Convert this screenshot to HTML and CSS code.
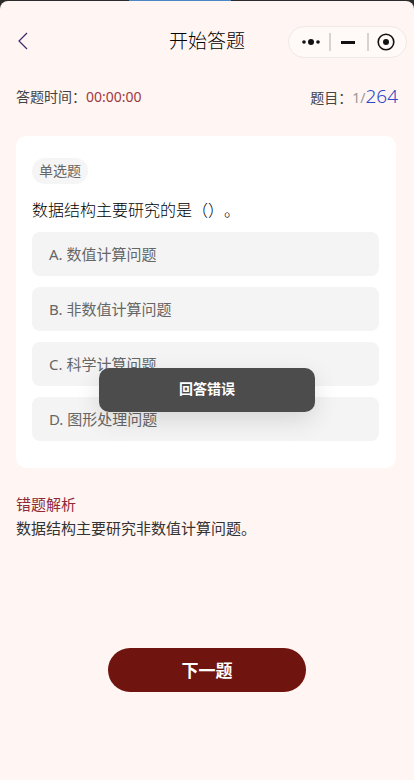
FILE: index.html
```html
<!DOCTYPE html>
<html lang="zh-CN">
<head>
    <meta charset="UTF-8">
    <meta name="viewport" content="width=device-width, initial-scale=1.0">
    <title>开始答题</title>
    <link rel="stylesheet" href="styles.css">
</head>
<body>
    <div class="top-strip">
        <div class="top-progress"></div>
    </div>

    <div class="page">
        <div class="navbar">
            <svg class="back-icon" width="12" height="18" viewBox="0 0 12 18">
                <path d="M10 1 L2 9 L10 17" fill="none" stroke="#3c2a6e" stroke-width="1.2"/>
            </svg>
            <div class="nav-title">开始答题</div>
            <div class="capsule">
                <svg class="capsule-dots" width="18" height="8" viewBox="0 0 18 8">
                    <circle cx="2" cy="4" r="1.8" fill="#111"/>
                    <circle cx="9" cy="4" r="3" fill="#111"/>
                    <circle cx="16" cy="4" r="1.8" fill="#111"/>
                </svg>
                <div class="capsule-line line-first"></div>
                <div class="capsule-minus"></div>
                <div class="capsule-line line-second"></div>
                <svg class="capsule-target" width="18" height="18" viewBox="0 0 18 18">
                    <circle cx="9" cy="9" r="7.8" fill="none" stroke="#111" stroke-width="1.6"/>
                    <circle cx="9" cy="9" r="3" fill="#111"/>
                </svg>
            </div>
        </div>

        <div class="stats">
            <div class="stat-time">答题时间：<span class="time-value">00:00:00</span></div>
            <div class="stat-count">题目：<span class="count-now">1/</span><span class="count-total">264</span></div>
        </div>

        <div class="card">
            <span class="tag">单选题</span>
            <div class="question">数据结构主要研究的是（）。</div>
            <div class="options">
                <div class="option">A. 数值计算问题</div>
                <div class="option">B. 非数值计算问题</div>
                <div class="option">C. 科学计算问题</div>
                <div class="option">D. 图形处理问题</div>
            </div>
        </div>

        <div class="analysis">
            <div class="analysis-title">错题解析</div>
            <div class="analysis-text">数据结构主要研究非数值计算问题。</div>
        </div>

        <div class="footer">
            <button class="next-btn">下一题</button>
        </div>
    </div>

    <div class="toast">回答错误</div>
</body>
</html>
```

FILE: styles.css
```css
* {
    box-sizing: border-box;
}

html, body {
    height: 100%;
}

body {
    margin: 0;
    overflow: hidden;
    display: flex;
    flex-direction: column;
    background-color: #2b2b2b;
    font-family: "Noto Sans", "Noto Sans CJK SC", sans-serif;
    text-spacing-trim: space-all;
}

.top-strip {
    height: 1px;
    flex-shrink: 0;
    padding-left: 129px;
}

.top-progress {
    width: 102px;
    height: 1px;
    background-color: #4a88c7;
}

.page {
    flex: 1;
    padding: 0 16px;
    background-color: #fff5f2;
    border-radius: 8px 8px 0 0;
}

.navbar {
    display: flex;
    align-items: center;
    justify-content: space-between;
    height: 42px;
    margin-top: 20px;
    position: relative;
}

.back-icon {
    margin-left: 1px;
    margin-top: -2px;
}

.nav-title {
    position: absolute;
    left: 0;
    right: 0;
    top: 7px;
    line-height: 26px;
    text-align: center;
    font-size: 19px;
    font-weight: 300;
    color: #000;
}

.capsule {
    position: relative;
    display: flex;
    align-items: center;
    width: 119px;
    height: 32px;
    margin-right: -9px;
    padding-left: 13px;
    background-color: #fff9f7;
    border: 1px solid #eee9e6;
    border-radius: 16px;
}

.capsule-line {
    width: 2px;
    height: 18px;
    background-color: #d6d3d1;
}

.line-first {
    margin-left: 9px;
}

.line-second {
    margin-left: 12px;
}

.capsule-minus {
    width: 14px;
    height: 3px;
    margin-left: 10px;
    background-color: #111;
}

.capsule-target {
    margin-left: 8px;
}

.stats {
    display: flex;
    align-items: center;
    justify-content: space-between;
    margin-top: 22px;
    height: 24px;
    line-height: 24px;
}

.stat-time {
    font-size: 14px;
    color: #444;
}

.time-value {
    color: #a13a3f;
}

.stat-count {
    font-size: 14px;
    color: #444;
}

.count-now {
    color: #999;
}

.count-total {
    font-size: 19px;
    font-weight: 300;
    color: #2f47c8;
}

.card {
    margin-top: 27px;
    margin-right: 2px;
    height: 332px;
    padding: 22px 17px 0 16px;
    background-color: #fff;
    border-radius: 10px;
}

.tag {
    display: block;
    width: fit-content;
    height: 26px;
    line-height: 26px;
    padding: 0 7px;
    font-size: 14px;
    color: #666;
    background-color: #f5f5f5;
    border-radius: 13px;
}

.question {
    margin-top: 14px;
    font-size: 16px;
    font-weight: 300;
    line-height: 24px;
    color: #000;
}

.options {
    display: flex;
    flex-direction: column;
    gap: 11px;
    margin-top: 10px;
}

.option {
    height: 44px;
    line-height: 44px;
    padding-left: 17px;
    font-size: 15px;
    color: #666;
    background-color: #f4f4f4;
    border-radius: 8px;
}

.analysis {
    margin-top: 24px;
    font-size: 15px;
    line-height: 24px;
}

.analysis-title {
    color: #8f2a3a;
}

.analysis-text {
    color: #333;
}

.footer {
    display: flex;
    justify-content: center;
    margin-top: 108px;
}

.next-btn {
    width: 198px;
    height: 44px;
    padding: 0 0 2px;
    border: none;
    border-radius: 22px;
    font-family: inherit;
    font-size: 17px;
    font-weight: bold;
    color: #fff;
    background-color: #70140f;
}

.toast {
    position: absolute;
    top: 368px;
    left: 99px;
    width: 216px;
    height: 44px;
    line-height: 42px;
    text-align: center;
    font-size: 14px;
    font-weight: bold;
    color: #fff;
    background-color: #4c4c4c;
    border-radius: 10px;
    box-shadow: 0 8px 24px rgba(0, 0, 0, 0.12);
}
```
